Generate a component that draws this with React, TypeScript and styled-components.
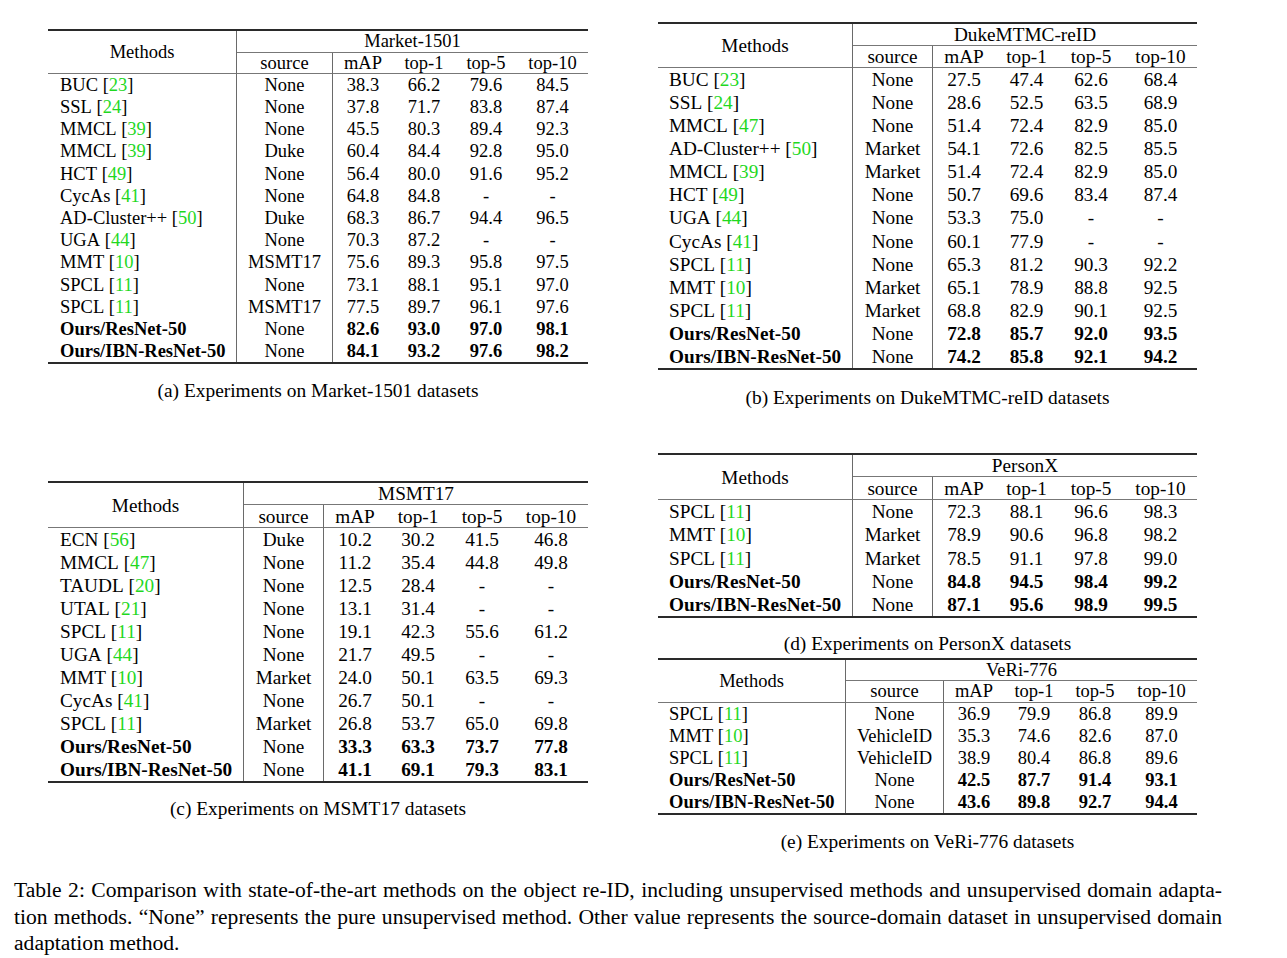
import React from "react";
import styled, { createGlobalStyle } from "styled-components";

const GlobalStyle = createGlobalStyle`
  html, body { margin: 0; padding: 0; background: #ffffff; }
  body {
    font-family: "Liberation Serif", "Times New Roman", serif;
    color: #000000;
  }
`;

type Row = { method: string; cite?: string; source: string; values: string[]; bold?: boolean };

type TableSpec = {
  id: string;
  dataset: string;
  caption: string;
  cols: number[];
  head: [number, number];
  rowH: number;
  fs: number;
  pad: number;
  top: number;
  capGap: number;
  rows: Row[];
};

const r = (label: string, source: string, values: string): Row => {
  const m = label.match(/^(.*) \[(\d+)\]$/);
  const bold = label.startsWith("Ours");
  return {
    method: m ? m[1] : label,
    cite: m ? m[2] : undefined,
    source,
    values: values.split(" "),
    bold,
  };
};

const tableA: TableSpec = {
  id: "a",
  dataset: "Market-1501",
  caption: "(a) Experiments on Market-1501 datasets",
  cols: [189, 96, 60, 62, 62, 71],
  head: [22, 21],
  rowH: 22.2,
  fs: 18.5,
  pad: 12,
  top: 29,
  capGap: 15,
  rows: [
    r("BUC [23]", "None", "38.3 66.2 79.6 84.5"),
    r("SSL [24]", "None", "37.8 71.7 83.8 87.4"),
    r("MMCL [39]", "None", "45.5 80.3 89.4 92.3"),
    r("MMCL [39]", "Duke", "60.4 84.4 92.8 95.0"),
    r("HCT [49]", "None", "56.4 80.0 91.6 95.2"),
    r("CycAs [41]", "None", "64.8 84.8 - -"),
    r("AD-Cluster++ [50]", "Duke", "68.3 86.7 94.4 96.5"),
    r("UGA [44]", "None", "70.3 87.2 - -"),
    r("MMT [10]", "MSMT17", "75.6 89.3 95.8 97.5"),
    r("SPCL [11]", "None", "73.1 88.1 95.1 97.0"),
    r("SPCL [11]", "MSMT17", "77.5 89.7 96.1 97.6"),
    r("Ours/ResNet-50", "None", "82.6 93.0 97.0 98.1"),
    r("Ours/IBN-ResNet-50", "None", "84.1 93.2 97.6 98.2"),
  ],
};

const tableB: TableSpec = {
  id: "b",
  dataset: "DukeMTMC-reID",
  caption: "(b) Experiments on DukeMTMC-reID datasets",
  cols: [195, 80, 62, 63, 66, 73],
  head: [22, 22],
  rowH: 23.1,
  fs: 19.25,
  pad: 11,
  top: 22,
  capGap: 16,
  rows: [
    r("BUC [23]", "None", "27.5 47.4 62.6 68.4"),
    r("SSL [24]", "None", "28.6 52.5 63.5 68.9"),
    r("MMCL [47]", "None", "51.4 72.4 82.9 85.0"),
    r("AD-Cluster++ [50]", "Market", "54.1 72.6 82.5 85.5"),
    r("MMCL [39]", "Market", "51.4 72.4 82.9 85.0"),
    r("HCT [49]", "None", "50.7 69.6 83.4 87.4"),
    r("UGA [44]", "None", "53.3 75.0 - -"),
    r("CycAs [41]", "None", "60.1 77.9 - -"),
    r("SPCL [11]", "None", "65.3 81.2 90.3 92.2"),
    r("MMT [10]", "Market", "65.1 78.9 88.8 92.5"),
    r("SPCL [11]", "Market", "68.8 82.9 90.1 92.5"),
    r("Ours/ResNet-50", "None", "72.8 85.7 92.0 93.5"),
    r("Ours/IBN-ResNet-50", "None", "74.2 85.8 92.1 94.2"),
  ],
};

const tableC: TableSpec = {
  id: "c",
  dataset: "MSMT17",
  caption: "(c) Experiments on MSMT17 datasets",
  cols: [196, 80, 62, 64, 64, 74],
  head: [22, 23],
  rowH: 23,
  fs: 19.25,
  pad: 12,
  top: 80,
  capGap: 14,
  rows: [
    r("ECN [56]", "Duke", "10.2 30.2 41.5 46.8"),
    r("MMCL [47]", "None", "11.2 35.4 44.8 49.8"),
    r("TAUDL [20]", "None", "12.5 28.4 - -"),
    r("UTAL [21]", "None", "13.1 31.4 - -"),
    r("SPCL [11]", "None", "19.1 42.3 55.6 61.2"),
    r("UGA [44]", "None", "21.7 49.5 - -"),
    r("MMT [10]", "Market", "24.0 50.1 63.5 69.3"),
    r("CycAs [41]", "None", "26.7 50.1 - -"),
    r("SPCL [11]", "Market", "26.8 53.7 65.0 69.8"),
    r("Ours/ResNet-50", "None", "33.3 63.3 73.7 77.8"),
    r("Ours/IBN-ResNet-50", "None", "41.1 69.1 79.3 83.1"),
  ],
};

const tableD: TableSpec = {
  id: "d",
  dataset: "PersonX",
  caption: "(d) Experiments on PersonX datasets",
  cols: [195, 80, 62, 63, 66, 73],
  head: [22, 23],
  rowH: 23.2,
  fs: 19.25,
  pad: 11,
  top: 45,
  capGap: 14,
  rows: [
    r("SPCL [11]", "None", "72.3 88.1 96.6 98.3"),
    r("MMT [10]", "Market", "78.9 90.6 96.8 98.2"),
    r("SPCL [11]", "Market", "78.5 91.1 97.8 99.0"),
    r("Ours/ResNet-50", "None", "84.8 94.5 98.4 99.2"),
    r("Ours/IBN-ResNet-50", "None", "87.1 95.6 98.9 99.5"),
  ],
};

const tableE: TableSpec = {
  id: "e",
  dataset: "VeRi-776",
  caption: "(e) Experiments on VeRi-776 datasets",
  cols: [188, 98, 60, 60, 62, 71],
  head: [21, 22],
  rowH: 22,
  fs: 18.5,
  pad: 11,
  top: 4,
  capGap: 15,
  rows: [
    r("SPCL [11]", "None", "36.9 79.9 86.8 89.9"),
    r("MMT [10]", "VehicleID", "35.3 74.6 82.6 87.0"),
    r("SPCL [11]", "VehicleID", "38.9 80.4 86.8 89.6"),
    r("Ours/ResNet-50", "None", "42.5 87.7 91.4 93.1"),
    r("Ours/IBN-ResNet-50", "None", "43.6 89.8 92.7 94.4"),
  ],
};

const RULE = "#2a2a2a";
const MID = "#777777";
const VLINE = "#6a6a6a";

const Page = styled.div`
  padding-left: 48px;
  width: 1287px;
  box-sizing: border-box;
`;

const Columns = styled.div`
  display: flex;
  align-items: flex-start;
  gap: 70px;
`;

const Column = styled.div<{ $width: number }>`
  display: flex;
  flex-direction: column;
  width: ${(p) => p.$width}px;
`;

const Figure = styled.div<{ $top: number }>`
  display: flex;
  flex-direction: column;
  margin-top: ${(p) => p.$top}px;
`;

const Grid = styled.div<{ $cols: string; $rows: string; $fs: number }>`
  display: grid;
  grid-template-columns: ${(p) => p.$cols};
  grid-template-rows: ${(p) => p.$rows};
  border-top: 2px solid ${RULE};
  border-bottom: 2px solid ${RULE};
  font-size: ${(p) => p.$fs}px;
  line-height: 1;
`;

const BaseCell = styled.div`
  display: flex;
  align-items: center;
  justify-content: center;
  white-space: nowrap;
  box-sizing: border-box;
  min-width: 0;
`;

const MethodsHead = styled(BaseCell)`
  grid-row: 1 / span 2;
  grid-column: 1;
  border-right: 1px solid ${VLINE};
  border-bottom: 1px solid ${MID};
`;

const DatasetHead = styled(BaseCell)`
  grid-row: 1;
  grid-column: 2 / span 5;
  border-bottom: 1px solid ${MID};
`;

const SubHead = styled(BaseCell)<{ $sep?: boolean }>`
  border-bottom: 1px solid ${MID};
  border-right: ${(p) => (p.$sep ? `1px solid ${VLINE}` : "none")};
`;

const MethodCell = styled(BaseCell)<{ $pad: number; $bold?: boolean }>`
  justify-content: flex-start;
  padding-left: ${(p) => p.$pad}px;
  border-right: 1px solid ${VLINE};
  font-weight: ${(p) => (p.$bold ? 700 : 400)};
`;

const SourceCell = styled(BaseCell)`
  border-right: 1px solid ${VLINE};
`;

const ValueCell = styled(BaseCell)<{ $bold?: boolean }>`
  font-weight: ${(p) => (p.$bold ? 700 : 400)};
`;

const Cite = styled.span`
  color: #1fd81f;
`;

const SubCaption = styled.div<{ $gap: number }>`
  margin-top: ${(p) => p.$gap}px;
  padding-top: 2px;
  font-size: 19.4px;
  line-height: 20px;
  text-align: center;
  white-space: nowrap;
`;

const MainCaption = styled.div`
  margin: 25px 0 0 -34px;
  width: 1208px;
  font-size: 21.6px;
  line-height: 26.5px;
`;

const CaptionLine = styled.div<{ $last?: boolean }>`
  white-space: nowrap;
  text-align: ${(p) => (p.$last ? "left" : "justify")};
  text-align-last: ${(p) => (p.$last ? "left" : "justify")};
`;

const HEADS = ["source", "mAP", "top-1", "top-5", "top-10"];

function ResultTable({ spec }: { spec: TableSpec }) {
  const cols = spec.cols.map((c) => `${c}px`).join(" ");
  const rows = `${spec.head[0]}px ${spec.head[1]}px repeat(${spec.rows.length}, ${spec.rowH}px)`;
  return (
    <Figure $top={spec.top}>
      <Grid $cols={cols} $rows={rows} $fs={spec.fs}>
        <MethodsHead>Methods</MethodsHead>
        <DatasetHead>{spec.dataset}</DatasetHead>
        {HEADS.map((h, i) => (
          <SubHead key={h} $sep={i === 0}>
            {h}
          </SubHead>
        ))}
        {spec.rows.map((row, i) => (
          <React.Fragment key={i}>
            <MethodCell $pad={spec.pad} $bold={row.bold}>
              {row.method}
              {row.cite && (
                <>
                  &nbsp;[<Cite>{row.cite}</Cite>]
                </>
              )}
            </MethodCell>
            <SourceCell>{row.source}</SourceCell>
            {row.values.map((v, j) => (
              <ValueCell key={j} $bold={row.bold}>
                {v}
              </ValueCell>
            ))}
          </React.Fragment>
        ))}
      </Grid>
      <SubCaption $gap={spec.capGap}>{spec.caption}</SubCaption>
    </Figure>
  );
}

export default function App() {
  return (
    <>
      <GlobalStyle />
      <Page>
        <Columns>
          <Column $width={540}>
            <ResultTable spec={tableA} />
            <ResultTable spec={tableC} />
          </Column>
          <Column $width={539}>
            <ResultTable spec={tableB} />
            <ResultTable spec={tableD} />
            <ResultTable spec={tableE} />
          </Column>
        </Columns>
        <MainCaption>
          <CaptionLine>
            Table 2: Comparison with state-of-the-art methods on the object re-ID, including unsupervised methods and unsupervised domain adapta-
          </CaptionLine>
          <CaptionLine>
            tion methods. “None” represents the pure unsupervised method. Other value represents the source-domain dataset in unsupervised domain
          </CaptionLine>
          <CaptionLine $last>adaptation method.</CaptionLine>
        </MainCaption>
      </Page>
    </>
  );
}
